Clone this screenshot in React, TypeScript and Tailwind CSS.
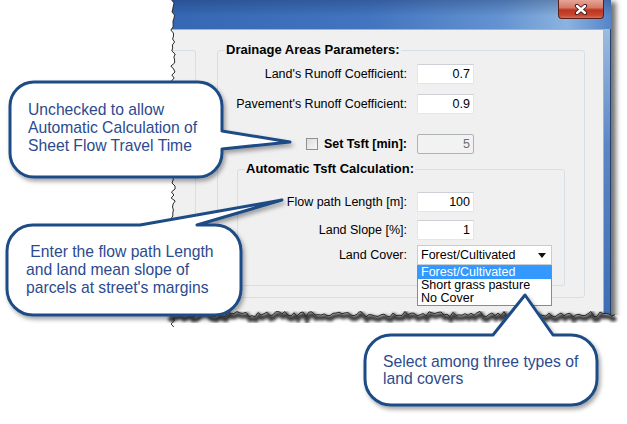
import React from "react";

const font = "font-['Liberation_Sans',Arial,sans-serif]";

// deterministic jitter for the torn paper edges
const rnd = (i: number) => {
  const v = Math.sin(i * 12.9898 + 78.233) * 43758.5453;
  return v - Math.floor(v);
};

const leftEdge = Array.from({ length: 110 }, (_, i) => [173 + (rnd(i) - 0.5) * 4.5, i * 3]);
const bottomEdge = Array.from({ length: 150 }, (_, i) => [168 + i * 3, 314 + (rnd(i + 300) - 0.5) * 6]);

const pts = (p: number[][]) => p.map(([x, y]) => `${x.toFixed(1)},${y.toFixed(1)}`).join(" ");

const TornEdges = () => (
  <svg className="absolute inset-0 pointer-events-none" width={627} height={424}>
    <defs>
      <filter id="blur" x="-10%" y="-50%" width="120%" height="200%">
        <feGaussianBlur stdDeviation="1.4" />
      </filter>
    </defs>
    <polygon points={`0,0 ${pts(leftEdge)} 0,330`} fill="#fff" />
    <polygon points={`0,330 ${pts(bottomEdge)} 627,318 627,424 0,424`} fill="#fff" />
    <polyline points={pts(bottomEdge.map(([x, y]) => [x + 1, y + 3]))} fill="none" stroke="#3a3a3a" strokeWidth={5} filter="url(#blur)" />
    <polyline points={pts(leftEdge)} fill="none" stroke="#2a2a2a" strokeWidth={1} />
    <polyline points={pts(bottomEdge)} fill="none" stroke="#2a2a2a" strokeWidth={1} />
  </svg>
);

const Callouts = () => (
  <svg className="absolute inset-0 pointer-events-none" width={627} height={424}>
    <defs>
      <filter id="shadow" x="-10%" y="-10%" width="130%" height="140%">
        <feDropShadow dx="2" dy="3" stdDeviation="2.2" floodColor="#000" floodOpacity="0.35" />
      </filter>
    </defs>
    <g fill="#fff" stroke="#1f4b85" strokeWidth={3} strokeLinejoin="round" filter="url(#shadow)">
      <path d="M34 82 H198 A24 24 0 0 1 222 106 V131 L290 142 L222 149 V153 A24 24 0 0 1 198 177 H34 A24 24 0 0 1 10 153 V106 A24 24 0 0 1 34 82 Z" />
      <path d="M33 225 H140 L282 200 L197 225 H215 A26 26 0 0 1 241 251 V289 A26 26 0 0 1 215 315 H33 A26 26 0 0 1 7 289 V251 A26 26 0 0 1 33 225 Z" />
      <path d="M391 335 H493 L525 295 L553 335 H571 A26 26 0 0 1 597 361 V379 A26 26 0 0 1 571 405 H391 A26 26 0 0 1 365 379 V361 A26 26 0 0 1 391 335 Z" />
    </g>
  </svg>
);

const TextBox = ({ value, disabled }: { value: string; disabled?: boolean }) => (
  <div
    className={
      disabled
        ? "w-[57px] h-[20px] border border-[#adb2b5] rounded-[2px] bg-[#f2f2f2] text-[#6d6d6d] text-right pr-[3px] text-[12.5px] leading-[18px]"
        : "w-[57px] h-[20px] border border-[#e3e6ea] border-t-[#cdd1d6] bg-white text-black text-right pr-[3px] text-[12.5px] leading-[18px]"
    }
  >
    {value}
  </div>
);

const Row = ({ label, labelW, mt, children }: { label: React.ReactNode; labelW: string; mt: string; children: React.ReactNode }) => (
  <div className={`flex items-center gap-[10px] ${mt}`}>
    <div className={`${labelW} text-right text-[12.5px] leading-[14px] text-black flex justify-end items-center`}>{label}</div>
    {children}
  </div>
);

const Combo = () => (
  <div className="relative w-[135px] h-[20px] border border-[#c9ccd1] bg-white flex items-center justify-between pl-[3px] pr-[5px] text-[12.5px] leading-[14px]">
    <span>Forest/Cultivated</span>
    <svg width="8" height="5" viewBox="0 0 8 5">
      <polygon points="0,0 8,0 4,5" fill="#111" />
    </svg>
    <div className="absolute left-[-1px] top-[19px] w-[135px] border border-[#8a8a8a] bg-white text-[12.5px] leading-[13px]">
      <div className="bg-[#3399ff] text-white pl-[3px]">Forest/Cultivated</div>
      <div className="pl-[3px]">Short grass pasture</div>
      <div className="pl-[3px]">No Cover</div>
    </div>
  </div>
);

const Window = () => (
  <div className="ml-[170px] w-[441px] h-[322px] flex flex-col shadow-[5px_2px_5px_rgba(0,0,0,0.55)]">
    <div className="h-[29px] flex justify-end pr-[7px] bg-[linear-gradient(180deg,rgba(15,35,80,0.3),rgba(255,255,255,0)_55%),linear-gradient(90deg,#3567b3,#4274bf_45%,#6393d1_75%,#8cb3e0_90%,#5485c8)]">
      <div className="w-[46px] h-[19px] rounded-b-[4px] border border-t-0 border-[#5a1f17] flex items-center justify-center bg-[linear-gradient(180deg,#e6a497_0%,#d77a67_42%,#bc3521_55%,#c8462f_85%,#d8705b_100%)]">
        <svg width="14" height="11" viewBox="0 0 14 11">
          <path d="M3 2 L11 9 M11 2 L3 9" stroke="#3d1410" strokeWidth="4.2" strokeLinecap="round" />
          <path d="M3 2 L11 9 M11 2 L3 9" stroke="#fff" strokeWidth="2.4" strokeLinecap="round" />
        </svg>
      </div>
    </div>
    <div className="flex-1 flex">
      <div className="flex-1 flex items-start bg-[#f0f0f0] border-t border-r border-[#9fb3cc] pt-[13px] text-black">
        <div className="mt-[7px] w-[26px] h-[249px] border-t border-r border-b border-[#d5dfe5] rounded-r-[3px]" />
        <fieldset className="ml-[21px] w-[368px] border border-[#d5dfe5] rounded-[3px] pb-[11px]">
          <legend className="ml-[7px] px-[1px] text-[13px] leading-[14px] font-bold">Drainage Areas Parameters:</legend>
          <Row label="Land's Runoff Coefficient:" labelW="w-[189px]" mt="mt-[7px]">
            <TextBox value="0.7" />
          </Row>
          <Row label="Pavement's Runoff Coefficient:" labelW="w-[189px]" mt="mt-[10px]">
            <TextBox value="0.9" />
          </Row>
          <Row
            label={
              <>
                <span className="w-[12px] h-[12px] border border-[#8e8f8f] bg-[linear-gradient(135deg,#dcdcdc,#f7f7f7)] mr-[6px]" />
                <span className="font-bold text-[12.5px]">Set Tsft [min]:</span>
              </>
            }
            labelW="w-[189px]"
            mt="mt-[20px]"
          >
            <TextBox value="5" disabled />
          </Row>
          <fieldset className="mt-[8px] ml-[19px] w-[328px] border border-[#d5dfe5] rounded-[3px] pb-[20px]">
            <legend className="ml-[7px] px-[1px] text-[13px] leading-[14px] font-bold">Automatic Tsft Calculation:</legend>
            <Row label="Flow path Length [m]:" labelW="w-[169px]" mt="mt-[16px]">
              <TextBox value="100" />
            </Row>
            <Row label="Land Slope [%]:" labelW="w-[169px]" mt="mt-[8px]">
              <TextBox value="1" />
            </Row>
            <Row label="Land Cover:" labelW="w-[169px]" mt="mt-[5px]">
              <Combo />
            </Row>
          </fieldset>
        </fieldset>
      </div>
      <div className="w-[7px] bg-[linear-gradient(180deg,#9dbbe0,#5b86c6_40%,#3d6cb3)] border-r border-[#24406c]" />
    </div>
  </div>
);

export default function App() {
  const text = "absolute text-[15.7px] text-[#2c4a8e] whitespace-pre";
  return (
    <div className={`relative w-[627px] h-[424px] overflow-hidden bg-white ${font}`}>
      <Window />
      <TornEdges />
      <Callouts />
      <div className={`${text} left-[28px] top-[101px] leading-[18px]`}>
        {"Unchecked to allow\nAutomatic Calculation of\nSheet Flow Travel Time"}
      </div>
      <div className={`${text} left-[26px] top-[243px] leading-[18px]`}>
        {" Enter the flow path Length\nand land mean slope of\nparcels at street's margins"}
      </div>
      <div className={`${text} left-[383px] top-[353px] leading-[17px]`}>
        {"Select among three types of\nland covers"}
      </div>
    </div>
  );
}
